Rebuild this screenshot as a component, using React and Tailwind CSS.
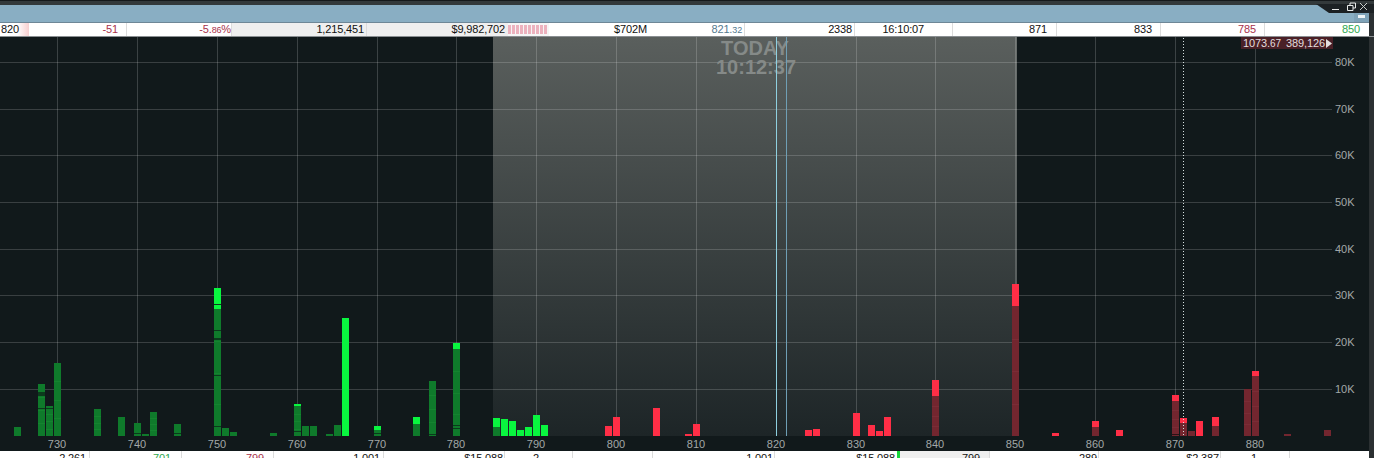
import React from "react";

const font = "[font-family:'Liberation_Sans',Arial,sans-serif]";

function Cell({ w, bg = "bg-white", tc = "text-[#111]", pr = 10, justify = "justify-end", border = true, children }) {
  return (
    <div
      className={`flex h-full shrink-0 items-center ${justify} ${bg} ${tc} ${border ? "border-r border-[#dcdcdc]" : ""}`}
      style={{ width: w, paddingRight: pr }}
    >
      <span className="whitespace-nowrap">{children}</span>
    </div>
  );
}

const RED = "text-[#a8324c]";
const GREEN = "text-[#2fa84f]";

function TopRow() {
  return (
    <div className={`flex h-[13px] w-[1369px] shrink-0 text-[11px] leading-[15px] tracking-[-0.15px] ${font}`}>
      <Cell w={29} bg="bg-gradient-to-r from-white from-60% to-[#f7cfd0]" pr={10} border={false}>820</Cell>
      <Cell w={98} pr={8} tc={RED}>-51</Cell>
      <Cell w={105} pr={0} tc={RED}>-5.<span className="text-[9px]">86</span>%</Cell>
      <Cell w={135} bg="bg-[#efefef]" pr={2}>1,215,451</Cell>
      <Cell w={141} bg="bg-[#efefef]" pr={3} border={false}>$9,982,702</Cell>
      <div className="flex h-full w-[41px] shrink-0 items-center gap-px bg-[#f6f6f6] py-[2px]">
        {Array.from({ length: 10 }).map((_, i) => (
          <span key={i} className="h-full w-[3px] bg-[#ecb2be]" />
        ))}
      </div>
      <Cell w={98} pr={0} border={false}>$702M</Cell>
      <Cell w={98} pr={2} tc="text-[#557a90]">821.<span className="text-[9px]">32</span></Cell>
      <Cell w={110} pr={2}>2338</Cell>
      <Cell w={98} pr={28}>16:10:07</Cell>
      <Cell w={104} pr={9}>871</Cell>
      <Cell w={104} pr={8}>833</Cell>
      <Cell w={104} pr={8} tc={RED}>785</Cell>
      <Cell w={104} pr={9} tc={GREEN} border={false}>850</Cell>
    </div>
  );
}

function BottomRow() {
  return (
    <div className={`flex h-[14px] w-[1369px] shrink-0 text-[11px] leading-[14px] tracking-[-0.15px] ${font}`}>
      <Cell w={90} pr={3}>2,261</Cell>
      <Cell w={92} pr={10} tc={GREEN}>701</Cell>
      <Cell w={92} pr={9} tc={RED}>799</Cell>
      <Cell w={110} pr={3}>1,001</Cell>
      <Cell w={121} pr={1}>$15,088</Cell>
      <Cell w={68} pr={33}>2</Cell>
      <Cell w={80}> </Cell>
      <Cell w={122} pr={1}>1,001</Cell>
      <Cell w={122} pr={2} border={false}>$15,088</Cell>
      <div className="h-full w-[3px] shrink-0 bg-[#19d83c]" />
      <Cell w={90} bg="bg-[#efefef]" pr={9}>799</Cell>
      <Cell w={109} pr={1}>289</Cell>
      <Cell w={122} pr={1}>$2,387</Cell>
      <Cell w={69} pr={32}>1</Cell>
      <Cell w={79} border={false}> </Cell>
    </div>
  );
}

// x, top y, y where the bright cap ends (top = all dark, 436 = all bright), separators
const greens = [
  [14, 427, 427], [38, 384, 384, [392, 393, 394, 395, 408]], [46, 406, 406, [408]], [54, 363, 363],
  [94, 409, 409], [118, 417, 417], [134, 423, 423, [433]], [142, 434, 434], [150, 412, 412], [174, 424, 424, [433]],
  [214, 288, 309, [304, 330, 338, 339, 375, 426]], [222, 428, 428], [230, 432, 432], [270, 433, 433],
  [294, 404, 406, [431]], [302, 426, 426], [310, 426, 426], [326, 434, 434], [334, 425, 425],
  [342, 318, 436], [374, 426, 430, [433]], [413, 417, 424], [429, 381, 381, [434]],
  [453, 343, 349, [425, 428]], [493, 418, 427], [501, 419, 436], [509, 421, 436], [517, 430, 436],
  [525, 427, 436], [533, 415, 436], [541, 425, 436],
];
const reds = [
  [605, 426, 436], [613, 417, 436], [653, 408, 436], [685, 434, 436], [693, 424, 436],
  [805, 430, 436], [813, 429, 436], [853, 413, 436], [868, 425, 436], [876, 431, 436], [884, 417, 436],
  [932, 380, 396], [1012, 284, 306], [1052, 433, 436], [1092, 421, 427], [1116, 430, 436],
  [1172, 395, 401, [434]], [1180, 418, 423], [1188, 431, 431], [1196, 421, 436], [1212, 417, 426],
  [1244, 389, 389], [1252, 371, 376], [1284, 434, 434], [1324, 430, 430],
];

const vLines = [57, 137, 217, 297, 377, 456, 536, 616, 696, 856, 935, 1015, 1095, 1175, 1255];
const hLines = [[62, "80K"], [109, "70K"], [155, "60K"], [202, "50K"], [249, "40K"], [295, "30K"], [342, "20K"], [389, "10K"]];
const xLabels = [[57, 730], [137, 740], [217, 750], [297, 760], [377, 770], [456, 780], [536, 790], [616, 800], [696, 810], [776, 820], [856, 830], [935, 840], [1015, 850], [1095, 860], [1175, 870], [1255, 880]];

function Bars({ data, bright, dark, stripe, line }) {
  return data.map(([x, top, split, lines = []]) => (
    <g key={x}>
      {split > top && <rect x={x} y={top} width="7" height={split - top} fill={bright} />}
      {split < 436 && <rect x={x} y={split} width="7" height={436 - split} fill={dark} />}
      {split < 436 && 436 - split > 20 &&
        [0.25, 0.5, 0.75].map((f) => (
          <rect key={f} x={x} y={Math.round(split + (436 - split) * f)} width="7" height="1" fill={stripe} />
        ))}
      {lines.map((y) => (
        <rect key={y} x={x} y={y} width="7" height="1" fill={line} />
      ))}
    </g>
  ));
}

function Chart() {
  return (
    <svg width="1369" height="414" viewBox="0 37 1369 414" className={`block shrink-0 ${font}`} shapeRendering="crispEdges">
      <defs>
        <linearGradient id="shade" x1="0" y1="0" x2="0" y2="1">
          <stop offset="0" stopColor="#5a5f5d" />
          <stop offset="1" stopColor="#1d2527" />
        </linearGradient>
      </defs>
      <rect x="0" y="37" width="1369" height="414" fill="#11191b" />
      <rect x="493" y="37" width="524" height="399" fill="url(#shade)" />
      <rect x="1016" y="37" width="1" height="399" fill="#7a7f7d" opacity="0.5" />
      {vLines.map((x) => (
        <rect key={x} x={x} y="37" width="1" height="399" fill="#fff" opacity="0.18" />
      ))}
      {hLines.map(([y]) => (
        <rect key={y} x="0" y={y} width="1332" height="1" fill="#fff" opacity="0.17" />
      ))}
      <g shapeRendering="auto" fontWeight="700" fontSize="20" fill="#858a88" textAnchor="middle">
        <text x="755" y="55">TODAY</text>
        <text x="756" y="74">10:12:37</text>
      </g>
      <rect x="776" y="37" width="1" height="399" fill="#8fd0e0" />
      <rect x="786" y="37" width="1" height="399" fill="#6f9fb5" />
      <Bars data={greens} bright="#09f63f" dark="#0f7a2b" stripe="#14842f" line="#0b3a1c" />
      <Bars data={reds} bright="#ff2e46" dark="#73262f" stripe="#7b2c36" line="#2a1216" />
      <line x1="1183.5" y1="38" x2="1183.5" y2="436" stroke="#d5e0e0" strokeWidth="1" strokeDasharray="1 2" />
      <g shapeRendering="auto" fontSize="11" fill="#a3a8a8">
        {hLines.map(([y, t]) => (
          <text key={t} x="1335" y={y + 4}>{t}</text>
        ))}
        {xLabels.map(([x, t]) => (
          <text key={t} x={x} y="448" textAnchor="middle">{t}</text>
        ))}
      </g>
    </svg>
  );
}

export default function App() {
  return (
    <div className="relative flex h-[458px] w-[1374px] flex-col overflow-hidden bg-[#2b3032]">
      <div className="h-px shrink-0 bg-[#15191b]" />
      <div className="h-1 shrink-0 bg-[#33393b]" />
      <div className="flex h-[18px] w-[1369px] shrink-0 justify-end border-b border-[#6e8797] bg-[#89aec3]">
        <div className="flex w-[15px] items-end justify-center bg-[#7fa3b8] pb-[4px]">
          <span className="h-[3px] w-[7px] bg-[#eef4f7]" />
        </div>
      </div>
      <TopRow />
      <div className="h-px shrink-0 bg-[#8a8f92]" />
      <Chart />
      <BottomRow />

      <svg width="58" height="14" viewBox="1316 0 58 14" className="absolute left-[1316px] top-0">
        <polygon points="1316,4 1374,4 1374,13 1329,13" fill="#1c2124" />
        <rect x="1332" y="9" width="7" height="1" fill="#e8eaea" />
        <path d="M1347.5 5.5h5.5v5h-5.5zM1350 5.5v-2.5h5.5v5h-2.5" fill="none" stroke="#e8eaea" />
        <path d="M1360 3l7 7M1367 3l-7 7" fill="none" stroke="#c9cdcd" />
      </svg>

      <div className={`absolute left-[1241px] top-[37px] flex h-[12px] w-[92px] items-center gap-[5px] whitespace-nowrap bg-[#4a2027] pl-[2px] text-[11px] leading-[12px] tracking-[-0.1px] text-[#e3dede] ${font}`}>
        <span>1073.<span className="text-[10px]">67</span></span>
        <span>389,126</span>
        <svg width="6" height="9" viewBox="0 0 6 9" className="-ml-[4px]">
          <polygon points="0,0 6,4.5 0,9" fill="#e3dede" />
        </svg>
      </div>
    </div>
  );
}
